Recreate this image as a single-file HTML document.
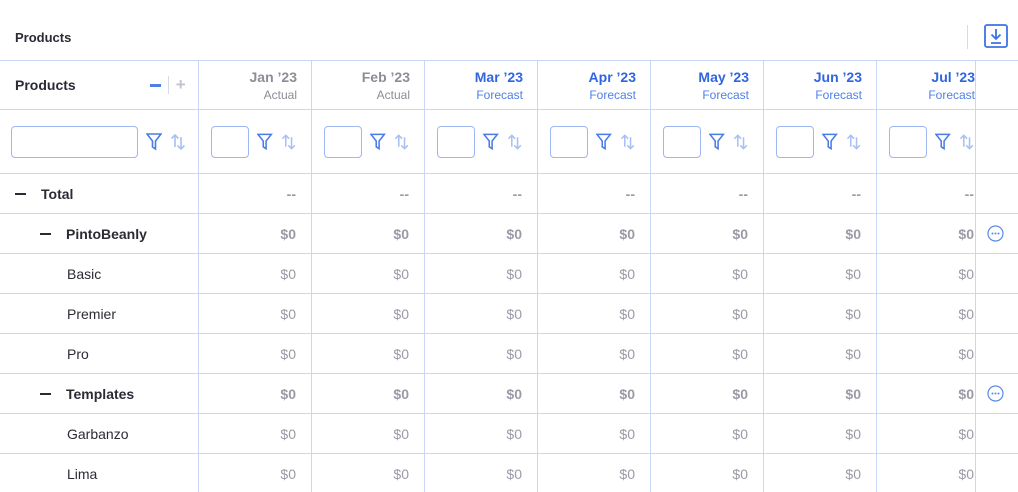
<!DOCTYPE html><html><head><style>
*{margin:0;padding:0;box-sizing:border-box}
body{width:1018px;height:492px;overflow:hidden;background:#fff;font-family:"Liberation Sans",sans-serif;position:relative;color:#2b2b36}
.a{position:absolute}
.grid{position:absolute;left:0;top:60px;width:975px;height:432px;overflow:hidden;border-top:1px solid #c9d7f7}
.row{display:flex;border-bottom:1px solid #c9d7f7;height:40px;align-items:center}
.c0{width:199px;flex:none;border-right:1px solid #c9d7f7;height:100%;display:flex;align-items:center;font-size:14px}
.c{width:113px;flex:none;border-right:1px solid #c9d7f7;height:100%;display:flex;align-items:center;justify-content:flex-end;padding-right:15px;font-size:14px;color:#9a9aa6}
.b .c{font-weight:bold;color:#9a9aa6}
.b .c0{font-weight:bold}
.h{height:49px}.h .c{flex-direction:column;align-items:flex-end;justify-content:center;padding-right:14px}
.h .c .m{font-size:14px;font-weight:bold;color:#8d8d97}.h .c .s{font-size:12px;color:#8d8d97;margin-top:3px}
.h .c.f .m{color:#2f66e0}.h .c.f .s{color:#4f7fe8}
.fr{height:64px}.fr .c{justify-content:flex-start;padding-left:12px}
.inp{border:1px solid #9db7f0;border-radius:4px;height:32px}
.dash{display:inline-block;width:11px;height:2px;background:#2b2b36;margin-right:15px}
</style></head><body>
<div class="a" style="left:15px;top:30px;font-size:13px;font-weight:bold">Products</div>
<div class="a" style="left:967px;top:25px;width:1px;height:24px;background:#d5dbea"></div>
<svg class="a" style="left:984px;top:24px" width="24" height="24" viewBox="0 0 24 24" fill="none" stroke="#3c73e6" stroke-width="1.8"><rect x="1" y="1" width="22" height="22" rx="2"/><path d="M12 5v10M7.5 10.5 12 15l4.5-4.5M7 19h10"/></svg>
<div class="grid">
<div class="row h"><div class="c0" style="padding-left:15px;font-weight:bold;font-size:14px">Products<span style="margin-left:74px;width:11px;height:3px;background:#4f7fe8;display:inline-block"></span><span style="width:1px;height:18px;background:#d5dbea;margin:0 7px 0 7px;display:inline-block"></span><span style="color:#c0c4cc;font-size:17px;font-weight:bold">+</span></div>
<div class="c"><span class="m">Jan ’23</span><span class="s">Actual</span></div>
<div class="c"><span class="m">Feb ’23</span><span class="s">Actual</span></div>
<div class="c f"><span class="m">Mar ’23</span><span class="s">Forecast</span></div>
<div class="c f"><span class="m">Apr ’23</span><span class="s">Forecast</span></div>
<div class="c f"><span class="m">May ’23</span><span class="s">Forecast</span></div>
<div class="c f"><span class="m">Jun ’23</span><span class="s">Forecast</span></div>
<div class="c f"><span class="m">Jul ’23</span><span class="s">Forecast</span></div>
</div>
<div class="row fr"><div class="c0" style="padding-left:11px"><div class="inp" style="width:127px"></div><svg style="margin-left:8px" width="16" height="18" viewBox="0 0 16 18" fill="none" stroke="#4a7be6" stroke-width="1.6"><path d="M1 1h14L9.5 8v8L6.5 14V8z"/></svg><svg style="margin-left:8px" width="16" height="18" viewBox="0 0 16 18" fill="none" stroke="#a9c0f3" stroke-width="1.6"><path d="M5 14V2M1.5 5.5 5 2l3.5 3.5M11 4v12M7.5 12.5 11 16l3.5-3.5"/></svg></div>
<div class="c"><div class="inp" style="width:40px"></div><svg style="margin-left:8px" width="16" height="18" viewBox="0 0 16 18" fill="none" stroke="#4a7be6" stroke-width="1.6"><path d="M1 1h14L9.5 8v8L6.5 14V8z"/></svg><svg style="margin-left:8px" width="16" height="18" viewBox="0 0 16 18" fill="none" stroke="#a9c0f3" stroke-width="1.6"><path d="M5 14V2M1.5 5.5 5 2l3.5 3.5M11 4v12M7.5 12.5 11 16l3.5-3.5"/></svg></div>
<div class="c"><div class="inp" style="width:40px"></div><svg style="margin-left:8px" width="16" height="18" viewBox="0 0 16 18" fill="none" stroke="#4a7be6" stroke-width="1.6"><path d="M1 1h14L9.5 8v8L6.5 14V8z"/></svg><svg style="margin-left:8px" width="16" height="18" viewBox="0 0 16 18" fill="none" stroke="#a9c0f3" stroke-width="1.6"><path d="M5 14V2M1.5 5.5 5 2l3.5 3.5M11 4v12M7.5 12.5 11 16l3.5-3.5"/></svg></div>
<div class="c"><div class="inp" style="width:40px"></div><svg style="margin-left:8px" width="16" height="18" viewBox="0 0 16 18" fill="none" stroke="#4a7be6" stroke-width="1.6"><path d="M1 1h14L9.5 8v8L6.5 14V8z"/></svg><svg style="margin-left:8px" width="16" height="18" viewBox="0 0 16 18" fill="none" stroke="#a9c0f3" stroke-width="1.6"><path d="M5 14V2M1.5 5.5 5 2l3.5 3.5M11 4v12M7.5 12.5 11 16l3.5-3.5"/></svg></div>
<div class="c"><div class="inp" style="width:40px"></div><svg style="margin-left:8px" width="16" height="18" viewBox="0 0 16 18" fill="none" stroke="#4a7be6" stroke-width="1.6"><path d="M1 1h14L9.5 8v8L6.5 14V8z"/></svg><svg style="margin-left:8px" width="16" height="18" viewBox="0 0 16 18" fill="none" stroke="#a9c0f3" stroke-width="1.6"><path d="M5 14V2M1.5 5.5 5 2l3.5 3.5M11 4v12M7.5 12.5 11 16l3.5-3.5"/></svg></div>
<div class="c"><div class="inp" style="width:40px"></div><svg style="margin-left:8px" width="16" height="18" viewBox="0 0 16 18" fill="none" stroke="#4a7be6" stroke-width="1.6"><path d="M1 1h14L9.5 8v8L6.5 14V8z"/></svg><svg style="margin-left:8px" width="16" height="18" viewBox="0 0 16 18" fill="none" stroke="#a9c0f3" stroke-width="1.6"><path d="M5 14V2M1.5 5.5 5 2l3.5 3.5M11 4v12M7.5 12.5 11 16l3.5-3.5"/></svg></div>
<div class="c"><div class="inp" style="width:40px"></div><svg style="margin-left:8px" width="16" height="18" viewBox="0 0 16 18" fill="none" stroke="#4a7be6" stroke-width="1.6"><path d="M1 1h14L9.5 8v8L6.5 14V8z"/></svg><svg style="margin-left:8px" width="16" height="18" viewBox="0 0 16 18" fill="none" stroke="#a9c0f3" stroke-width="1.6"><path d="M5 14V2M1.5 5.5 5 2l3.5 3.5M11 4v12M7.5 12.5 11 16l3.5-3.5"/></svg></div>
<div class="c"><div class="inp" style="width:40px"></div><svg style="margin-left:8px" width="16" height="18" viewBox="0 0 16 18" fill="none" stroke="#4a7be6" stroke-width="1.6"><path d="M1 1h14L9.5 8v8L6.5 14V8z"/></svg><svg style="margin-left:8px" width="16" height="18" viewBox="0 0 16 18" fill="none" stroke="#a9c0f3" stroke-width="1.6"><path d="M5 14V2M1.5 5.5 5 2l3.5 3.5M11 4v12M7.5 12.5 11 16l3.5-3.5"/></svg></div>
</div>
<div class="row b"><div class="c0" style="padding-left:15px"><span class="dash"></span>Total</div><div class="c">--</div><div class="c">--</div><div class="c">--</div><div class="c">--</div><div class="c">--</div><div class="c">--</div><div class="c">--</div></div>
<div class="row b"><div class="c0" style="padding-left:40px"><span class="dash"></span>PintoBeanly</div><div class="c">$0</div><div class="c">$0</div><div class="c">$0</div><div class="c">$0</div><div class="c">$0</div><div class="c">$0</div><div class="c">$0</div></div>
<div class="row"><div class="c0" style="padding-left:67px">Basic</div><div class="c">$0</div><div class="c">$0</div><div class="c">$0</div><div class="c">$0</div><div class="c">$0</div><div class="c">$0</div><div class="c">$0</div></div>
<div class="row"><div class="c0" style="padding-left:67px">Premier</div><div class="c">$0</div><div class="c">$0</div><div class="c">$0</div><div class="c">$0</div><div class="c">$0</div><div class="c">$0</div><div class="c">$0</div></div>
<div class="row"><div class="c0" style="padding-left:67px">Pro</div><div class="c">$0</div><div class="c">$0</div><div class="c">$0</div><div class="c">$0</div><div class="c">$0</div><div class="c">$0</div><div class="c">$0</div></div>
<div class="row b"><div class="c0" style="padding-left:40px"><span class="dash"></span>Templates</div><div class="c">$0</div><div class="c">$0</div><div class="c">$0</div><div class="c">$0</div><div class="c">$0</div><div class="c">$0</div><div class="c">$0</div></div>
<div class="row"><div class="c0" style="padding-left:67px">Garbanzo</div><div class="c">$0</div><div class="c">$0</div><div class="c">$0</div><div class="c">$0</div><div class="c">$0</div><div class="c">$0</div><div class="c">$0</div></div>
<div class="row"><div class="c0" style="padding-left:67px">Lima</div><div class="c">$0</div><div class="c">$0</div><div class="c">$0</div><div class="c">$0</div><div class="c">$0</div><div class="c">$0</div><div class="c">$0</div></div>
</div>
<div class="a" style="left:975px;top:60px;width:43px;height:432px;border-top:1px solid #c9d7f7">
<div style="height:49px;border-bottom:1px solid #c9d7f7"></div>
<div style="height:64px;border-bottom:1px solid #c9d7f7"></div>
<div style="height:40px;border-bottom:1px solid #c9d7f7"></div>
<div style="height:40px;border-bottom:1px solid #c9d7f7"></div>
<div style="height:40px;border-bottom:1px solid #c9d7f7"></div>
<div style="height:40px;border-bottom:1px solid #c9d7f7"></div>
<div style="height:40px;border-bottom:1px solid #c9d7f7"></div>
<div style="height:40px;border-bottom:1px solid #c9d7f7"></div>
<div style="height:40px;border-bottom:1px solid #c9d7f7"></div>
</div>
<div class="a" style="left:975px;top:60px;width:1px;height:432px;background:#c9d7f7"></div>
<svg class="a" style="left:987px;top:225px" width="17" height="17" viewBox="0 0 17 17"><circle cx="8.5" cy="8.5" r="7.5" fill="none" stroke="#5a87e8" stroke-width="1.2"/><circle cx="5.5" cy="8.5" r="1" fill="#5a87e8"/><circle cx="8.5" cy="8.5" r="1" fill="#5a87e8"/><circle cx="11.5" cy="8.5" r="1" fill="#5a87e8"/></svg>
<svg class="a" style="left:987px;top:385px" width="17" height="17" viewBox="0 0 17 17"><circle cx="8.5" cy="8.5" r="7.5" fill="none" stroke="#5a87e8" stroke-width="1.2"/><circle cx="5.5" cy="8.5" r="1" fill="#5a87e8"/><circle cx="8.5" cy="8.5" r="1" fill="#5a87e8"/><circle cx="11.5" cy="8.5" r="1" fill="#5a87e8"/></svg>
</body></html>
